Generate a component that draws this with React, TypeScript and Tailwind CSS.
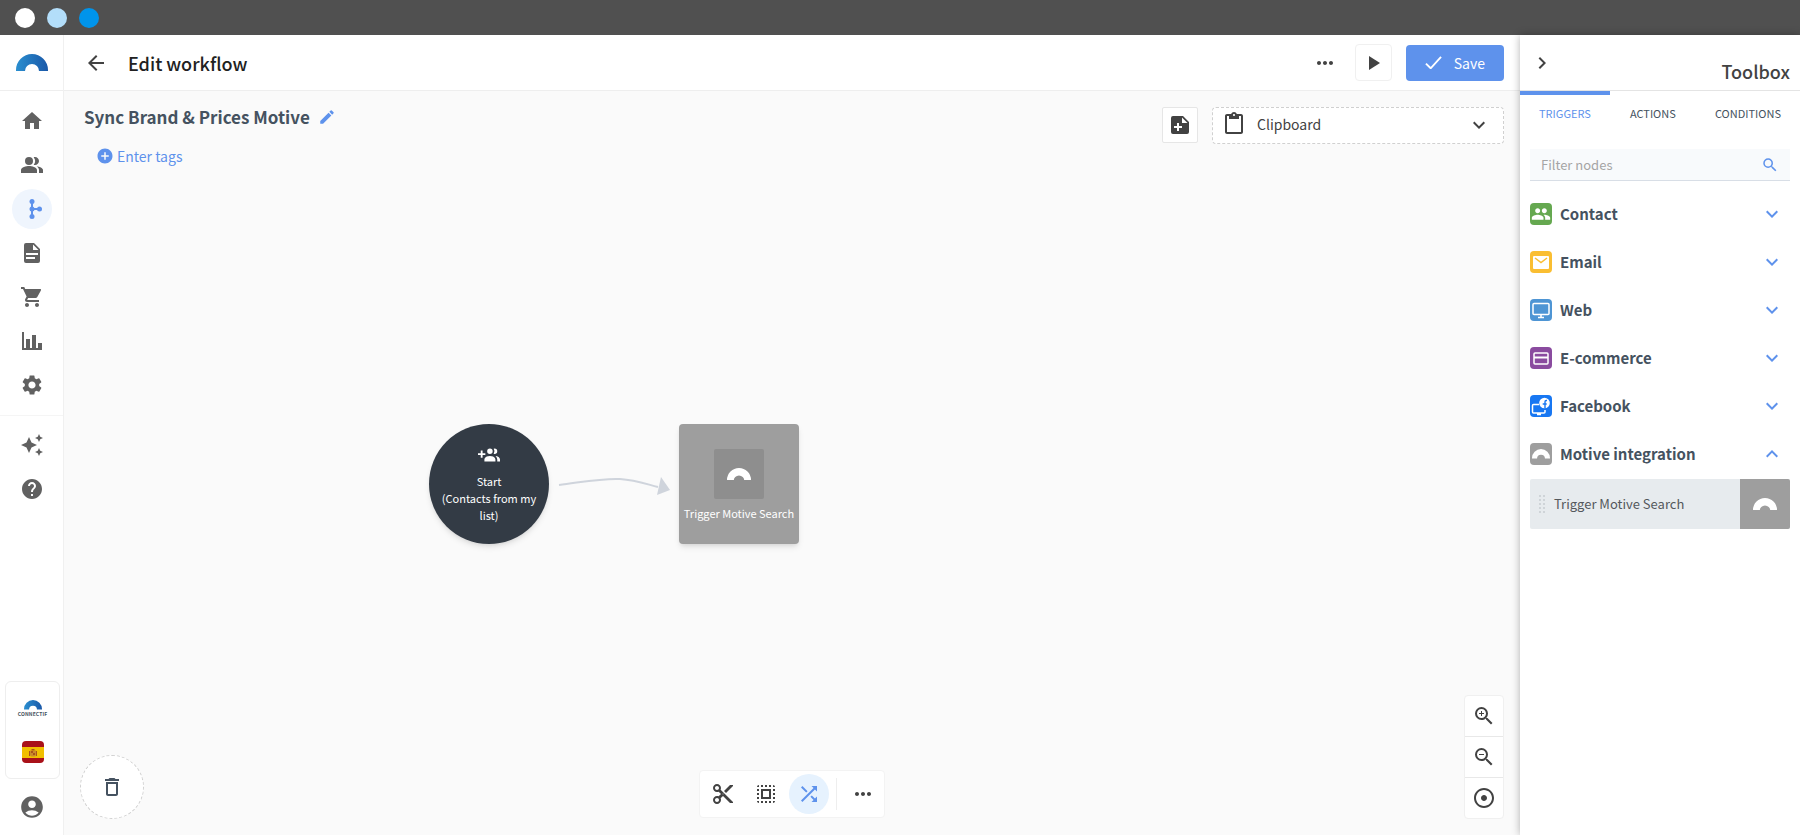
import React, { useState } from "react";
import {
  MdAccountCircle,
  MdAddCircle,
  MdAdjust,
  MdArrowBack,
  MdAutoAwesome,
  MdContentCut,
  MdContentPaste,
  MdDeleteOutline,
  MdEdit,
  MdExpandLess,
  MdExpandMore,
  MdGroup,
  MdHelp,
  MdHome,
  MdChevronRight,
  MdMoreHoriz,
  MdPeopleAlt,
  MdPlayArrow,
  MdSearch,
  MdSelectAll,
  MdSettings,
  MdShoppingCart,
  MdShuffle,
  MdZoomIn,
  MdZoomOut,
} from "react-icons/md";

type iconProps = {
  className?: string;
};

const Arch = ({ className }: iconProps) => (
  <svg viewBox="0 0 32 17" className={className} fill="currentColor">
    <path d="M0 17V16a16 16 0 0 1 32 0v1h-9a7 7 0 0 0-14 0z" />
  </svg>
);

const BrandArch = ({ className }: iconProps) => (
  <svg viewBox="0 0 32 17" className={className}>
    <defs>
      <linearGradient id="brand" x1="0" y1="0" x2="1" y2="0">
        <stop offset="0" stopColor="#2a8fd0" />
        <stop offset="1" stopColor="#1a58a8" />
      </linearGradient>
    </defs>
    <path fill="url(#brand)" d="M0 17V16a16 16 0 0 1 32 0v1h-9a7 7 0 0 0-14 0z" />
  </svg>
);

const FlowIcon = ({ className }: iconProps) => (
  <svg viewBox="0 0 24 24" className={className} fill="currentColor">
    <path d="M11 4h2v16h-2z" />
    <path d="M12 11h8v2h-8z" />
    <circle cx="12" cy="4.500" r="2.500" />
    <circle cx="12" cy="12" r="2.500" />
    <circle cx="12" cy="19.500" r="2.500" />
    <circle cx="19.500" cy="12" r="2.500" />
  </svg>
);

const FileIcon = ({ className }: iconProps) => (
  <svg viewBox="0 0 24 24" className={className} fill="currentColor">
    <path
      fillRule="evenodd"
      d="M6 2a2 2 0 0 0-2 2v16a2 2 0 0 0 2 2h12a2 2 0 0 0 2-2V8l-6-6H6zm7 1.500L18.500 9H13V3.500zM6 12h12v2H6v-2zm0 4h9v2H6v-2z"
    />
  </svg>
);

const ChartIcon = ({ className }: iconProps) => (
  <svg viewBox="0 0 24 24" className={className} fill="currentColor">
    <path d="M22 21H2V3h2v16h2v-9h4v9h2V6h4v13h2v-5h4z" />
  </svg>
);

const NotePlusIcon = ({ className }: iconProps) => (
  <svg viewBox="0 0 24 24" className={className} fill="currentColor">
    <path
      fillRule="evenodd"
      d="M5 3a2 2 0 0 0-2 2v14a2 2 0 0 0 2 2h14a2 2 0 0 0 2-2V9l-6-6H5zm9 1.500L19.500 10H14V4.500zM9 10h2v3h3v2h-3v3H9v-3H6v-2h3v-3z"
    />
  </svg>
);

const GroupPlusIcon = ({ className }: iconProps) => (
  <svg viewBox="0 0 24 24" className={className} fill="currentColor">
    <path d="M19 17v2H7v-2s0-4 6-4 6 4 6 4M16 8a3 3 0 1 0-3 3 3 3 0 0 0 3-3m3.200 5.060A5.600 5.600 0 0 1 21 17v2h3v-2s0-3.450-4.800-3.940M18 5a2.910 2.910 0 0 0-.89.14 5 5 0 0 1 0 5.720A2.910 2.910 0 0 0 18 11a3 3 0 0 0 0-6M8 10H5V7H3v3H0v2h3v3h2v-3h3z" />
  </svg>
);

const CheckIcon = ({ className }: iconProps) => (
  <svg viewBox="0 0 18 14" className={className} fill="none" stroke="currentColor" strokeWidth="2">
    <path d="M1 8l5 5L17 1" />
  </svg>
);

const MailIcon = ({ className }: iconProps) => (
  <svg viewBox="0 0 22 22" className={className}>
    <rect x="3" y="5" width="16" height="13" rx="1" fill="#fff" />
    <path d="M5 7l6 4.500L17 7" fill="none" stroke="#fabe32" strokeWidth="1.500" />
  </svg>
);

const MonitorIcon = ({ className }: iconProps) => (
  <svg viewBox="0 0 22 22" className={className} fill="none" stroke="#fff">
    <rect x="3" y="4.500" width="16" height="11" rx="1" strokeWidth="1.500" />
    <path d="M11 16v2.500M8 18.500h6" strokeWidth="1.600" />
  </svg>
);

const CardIcon = ({ className }: iconProps) => (
  <svg viewBox="0 0 22 22" className={className} fill="none" stroke="#fff">
    <rect x="4" y="6" width="14" height="11" rx="1" strokeWidth="1.500" />
    <path d="M4 10.500h14" strokeWidth="2" />
  </svg>
);

const FacebookIcon = ({ className }: iconProps) => (
  <svg viewBox="0 0 22 22" className={className}>
    <path
      d="M9 9.500H3.500a1 1 0 0 0-1 1V17a1 1 0 0 0 1 1H14a1 1 0 0 0 1-1v-2M7 19.500h4"
      fill="none"
      stroke="#fff"
      strokeWidth="1.500"
    />
    <circle cx="14.500" cy="8" r="5.300" fill="#fff" />
    <path
      d="M15 13.500V8.500M12.700 9h4M17 5.500h-.8c-.9 0-1.200.5-1.200 1.300V9"
      fill="none"
      stroke="#1877f2"
      strokeWidth="1.400"
    />
  </svg>
);

const FlagIcon = ({ className }: iconProps) => (
  <svg viewBox="0 0 22 22" className={className}>
    <clipPath id="flag">
      <rect width="22" height="22" rx="4" />
    </clipPath>
    <g clipPath="url(#flag)">
      <path fill="#a91119" d="M0 0h22v22H0z" />
      <path fill="#f1bf00" d="M0 6h22v11H0z" />
      <path fill="#c98a2b" d="M8 9.500h6v4.500a2 2 0 0 1-2 1.500h-2a2 2 0 0 1-2-1.500z" />
      <path fill="#a9541a" d="M9.500 8h3v1.500h-3zM7 10h1v5H7zM14 10h1v5h-1zM9 10h2v2H9zM11 12h2v2h-2z" />
    </g>
  </svg>
);

const navItems = [
  { name: "Home", Icon: MdHome },
  { name: "Contacts", Icon: MdPeopleAlt },
  { name: "Workflows", Icon: FlowIcon, active: true },
  { name: "Content", Icon: FileIcon },
  { name: "Store", Icon: MdShoppingCart },
  { name: "Reports", Icon: ChartIcon },
  { name: "Settings", Icon: MdSettings },
];

const helpItems = [
  { name: "News", Icon: MdAutoAwesome },
  { name: "Help", Icon: MdHelp },
];

const categories = [
  { name: "Contact", Icon: MdGroup, color: "bg-[#65a850]", size: "size-5" },
  { name: "Email", Icon: MailIcon, color: "bg-[#fabe32]", size: "size-[22px]" },
  { name: "Web", Icon: MonitorIcon, color: "bg-[#4e95d4]", size: "size-[22px]" },
  { name: "E-commerce", Icon: CardIcon, color: "bg-[#8a4b9f]", size: "size-[22px]" },
  { name: "Facebook", Icon: FacebookIcon, color: "bg-[#1877f2]", size: "size-[22px]" },
  { name: "Motive integration", Icon: Arch, color: "bg-[#9e9e9e]", size: "w-[18px]" },
];

const NavLink = ({ item }: { item: any }) => (
  <a href="#" aria-label={item.name} className="flex h-11 items-center justify-center">
    <span
      className={
        item.active
          ? "flex size-10 items-center justify-center rounded-full bg-[#eff5fd] text-[#5e92ec]"
          : "flex size-10 items-center justify-center"
      }
    >
      <item.Icon className="size-6" />
    </span>
  </a>
);

const Sidebar = () => (
  <aside className="flex w-16 shrink-0 flex-col border-r border-[#f0f0f0] bg-white text-[#616161]">
    <div className="flex h-14 shrink-0 items-center justify-center border-b border-[#eeeeee]">
      <BrandArch className="w-8" />
    </div>
    <nav className="py-2">
      {navItems.map((item) => (
        <NavLink key={item.name} item={item} />
      ))}
    </nav>
    <nav className="border-t border-[#f5f5f5] py-[7px]">
      {helpItems.map((item) => (
        <NavLink key={item.name} item={item} />
      ))}
    </nav>
    <div className="mt-auto mr-[3px] ml-[5px] flex flex-col items-center gap-6 rounded-md border border-[#eeeeee] pt-[18px] pb-[15px]">
      <div className="flex flex-col items-center">
        <BrandArch className="w-[18px]" />
        <span className="mt-px text-[5px] leading-[6px] font-bold tracking-wide text-[#455260]">
          CONNECTIF
        </span>
      </div>
      <FlagIcon className="size-[22px]" />
    </div>
    <a href="#" aria-label="Account" className="flex h-14 items-center justify-center">
      <MdAccountCircle className="size-[26px]" />
    </a>
  </aside>
);

const Header = () => (
  <header className="flex h-14 shrink-0 items-center border-b border-[#eeeeee] bg-white pr-4 pl-5 text-[#424242]">
    <button aria-label="Back" className="flex size-6 items-center justify-center">
      <MdArrowBack className="size-6" />
    </button>
    <h1 className="ml-5 text-lg font-medium text-[#212121]">Edit workflow</h1>
    <div className="ml-auto flex items-center gap-[14px]">
      <button aria-label="More options" className="flex size-8 items-center justify-center">
        <MdMoreHoriz className="size-6" />
      </button>
      <button
        aria-label="Run"
        className="flex size-[37px] items-center justify-center rounded-sm border border-[#f0f0f0]"
      >
        <MdPlayArrow className="size-6" />
      </button>
      <button className="flex h-9 items-center gap-3 rounded-sm bg-[#5e92ec] px-[19px] text-sm text-white">
        <CheckIcon className="w-[17px]" />
        Save
      </button>
    </div>
  </header>
);

const Nodes = () => (
  <>
    <div className="absolute top-[333px] left-[365px] flex size-[120px] flex-col items-center rounded-full bg-[#333b45] pt-5 text-center text-[11px] leading-[17px] text-white shadow-md">
      <GroupPlusIcon className="size-[22px]" />
      <span className="mt-[7px]">Start</span>
      <span className="px-3">(Contacts from my list)</span>
    </div>
    <svg className="absolute top-[380px] left-[494px] h-10 w-[120px]" viewBox="0 0 120 40">
      <path d="M1 14C25 11 45 7 62 8c16 1 26 5 38 8" fill="none" stroke="#cfd4dc" strokeWidth="2" />
      <path d="M103 6l9 13-13 5z" fill="#cfd4dc" />
    </svg>
    <div className="absolute top-[333px] left-[615px] flex size-[120px] flex-col items-center rounded-sm bg-[#9e9e9e] pt-[25px] text-[11px] leading-[17px] text-white shadow-md">
      <span className="flex size-[50px] items-center justify-center rounded-xs bg-[#8e8e8e]">
        <Arch className="w-6" />
      </span>
      <span className="mt-[6px] whitespace-nowrap">Trigger Motive Search</span>
    </div>
  </>
);

const Canvas = () => (
  <section className="relative flex-1 overflow-hidden bg-[#fafafa] text-[#424242]">
    <Nodes />
    <div className="flex items-start justify-between pt-4 pr-4 pl-5">
      <div>
        <h2 className="flex items-center gap-2 text-[17px] leading-[20px] font-bold text-[#455260]">
          Sync Brand & Prices Motive
          <button aria-label="Rename" className="text-[#5e92ec]">
            <MdEdit className="size-[18px]" />
          </button>
        </h2>
        <button className="mt-[18px] ml-3 flex items-center gap-[3px] text-sm leading-[22px] text-[#5e92ec]">
          <MdAddCircle className="size-[18px]" />
          Enter tags
        </button>
      </div>
      <div className="flex items-start gap-[14px]">
        <button
          aria-label="Add note"
          className="flex size-9 items-center justify-center rounded-xs border border-[#e6e6e6] bg-white"
        >
          <NotePlusIcon className="size-6" />
        </button>
        <div className="relative">
          <MdContentPaste className="pointer-events-none absolute top-[5px] left-[10px] size-6" />
          <select
            aria-label="Clipboard"
            className="block h-[37px] w-[292px] appearance-none rounded-sm border border-dashed border-[#d0d0d0] bg-white pb-[3px] pl-11 text-sm"
          >
            <option>Clipboard</option>
          </select>
          <MdExpandMore className="pointer-events-none absolute top-[6px] right-[13px] size-6" />
        </div>
      </div>
    </div>

    <button
      aria-label="Delete"
      className="absolute bottom-4 left-4 flex size-16 items-center justify-center rounded-full border border-dashed border-[#d0d0d0] bg-white text-[#455260]"
    >
      <MdDeleteOutline className="size-6" />
    </button>

    <div className="absolute bottom-[17px] left-1/2 flex h-12 -translate-x-1/2 items-center rounded-sm border border-[#f3f3f3] bg-white px-[3px]">
      <button aria-label="Cut" className="flex size-10 items-center justify-center">
        <MdContentCut className="size-6" />
      </button>
      <button aria-label="Select all" className="mx-[3px] flex size-10 items-center justify-center">
        <MdSelectAll className="size-6" />
      </button>
      <button
        aria-label="Arrange"
        className="flex size-10 items-center justify-center rounded-full bg-[#e6f2fe] text-[#5e92ec]"
      >
        <MdShuffle className="size-6" />
      </button>
      <span className="mx-[7px] h-8 w-px bg-[#eeeeee]" />
      <button aria-label="More tools" className="flex h-9 w-[37px] items-center justify-center">
        <MdMoreHoriz className="size-6" />
      </button>
    </div>

    <div className="absolute right-4 bottom-4 flex w-10 flex-col divide-y divide-[#e8e8e8] rounded-sm border border-[#f0f0f0] bg-white">
      <button aria-label="Zoom in" className="flex h-[41px] items-center justify-center">
        <MdZoomIn className="size-6" />
      </button>
      <button aria-label="Zoom out" className="flex h-[41px] items-center justify-center">
        <MdZoomOut className="size-6" />
      </button>
      <button aria-label="Center" className="flex h-10 items-center justify-center">
        <MdAdjust className="size-6" />
      </button>
    </div>
  </section>
);

const Toolbox = () => {
  const [tab, setTab] = useState("TRIGGERS");
  const [open, setOpen] = useState("Motive integration");
  const [filter, setFilter] = useState("");

  return (
    <aside className="z-10 flex w-[280px] shrink-0 flex-col bg-white shadow-[0_0_8px_rgba(0,0,0,0.3)]">
      <div className="flex h-14 shrink-0 items-center justify-between border-b border-[#e4e4e4] px-[10px] text-[#424242]">
        <button aria-label="Collapse toolbox">
          <MdChevronRight className="size-6" />
        </button>
        <h2 className="pt-4 text-lg font-medium">Toolbox</h2>
      </div>
      <div className="flex justify-between">
        {["TRIGGERS", "ACTIONS", "CONDITIONS"].map((name) => (
          <button
            key={name}
            onClick={() => setTab(name)}
            className={
              tab === name
                ? "h-10 rounded-br-sm border-t-4 border-[#5e92ec] px-[19px] text-[11px] text-[#5e92ec]"
                : "h-10 border-t-4 border-transparent px-[19px] text-[11px] text-[#455260]"
            }
          >
            {name}
          </button>
        ))}
      </div>
      <div className="mx-[10px] mt-[18px] flex h-8 items-center border-b border-[#d8dee6] bg-[#f8fafc] pr-[11px]">
        <input
          type="text"
          aria-label="Filter nodes"
          placeholder="Filter nodes"
          value={filter}
          onChange={(e) => setFilter(e.target.value)}
          className="min-w-0 flex-1 px-[11px] text-[13px] outline-none placeholder:text-[#a5a5a5]"
        />
        <MdSearch className="size-[18px] text-[#5e92ec]" />
      </div>
      <div className="mx-[10px] mt-[9px]">
        {categories.map(({ name, Icon, color, size }) => (
          <button
            key={name}
            onClick={() => setOpen(open === name ? "" : name)}
            className="flex h-12 w-full items-center pr-[6px] text-[15px] font-bold text-[#455260]"
          >
            <span
              className={`mr-2 flex size-[22px] items-center justify-center rounded-sm text-white ${color}`}
            >
              <Icon className={size} />
            </span>
            {name}
            <span className="ml-auto text-[#5e92ec]">
              {open === name ? <MdExpandLess className="size-6" /> : <MdExpandMore className="size-6" />}
            </span>
          </button>
        ))}
        {open === "Motive integration" && (
          <div className="mt-px flex h-[50px] items-center overflow-hidden rounded-xs bg-[#e7ebee] text-[13px] text-[#54585c]">
            <span className="ml-[9px] grid grid-cols-2 gap-[2px]">
              {Array.from({ length: 10 }, (_, i) => (
                <i key={i} className="size-[2px] bg-[#cfd4d8]" />
              ))}
            </span>
            <span className="ml-[9px] flex-1">Trigger Motive Search</span>
            <span className="flex size-[50px] items-center justify-center bg-[#9e9e9e] text-white">
              <Arch className="w-6" />
            </span>
          </div>
        )}
      </div>
    </aside>
  );
};

export default function App() {
  return (
    <div className="flex h-screen flex-col font-['Noto_Sans_CJK_SC','Noto_Sans',sans-serif]">
      <div className="flex h-[35px] shrink-0 items-center gap-3 bg-[#505050] px-[15px]">
        <span className="size-5 rounded-full bg-white" />
        <span className="size-5 rounded-full bg-[#b3defa]" />
        <span className="size-5 rounded-full bg-[#0094eb]" />
      </div>
      <div className="flex min-h-0 flex-1">
        <Sidebar />
        <main className="flex min-w-0 flex-1 flex-col">
          <Header />
          <Canvas />
        </main>
        <Toolbox />
      </div>
    </div>
  );
}
